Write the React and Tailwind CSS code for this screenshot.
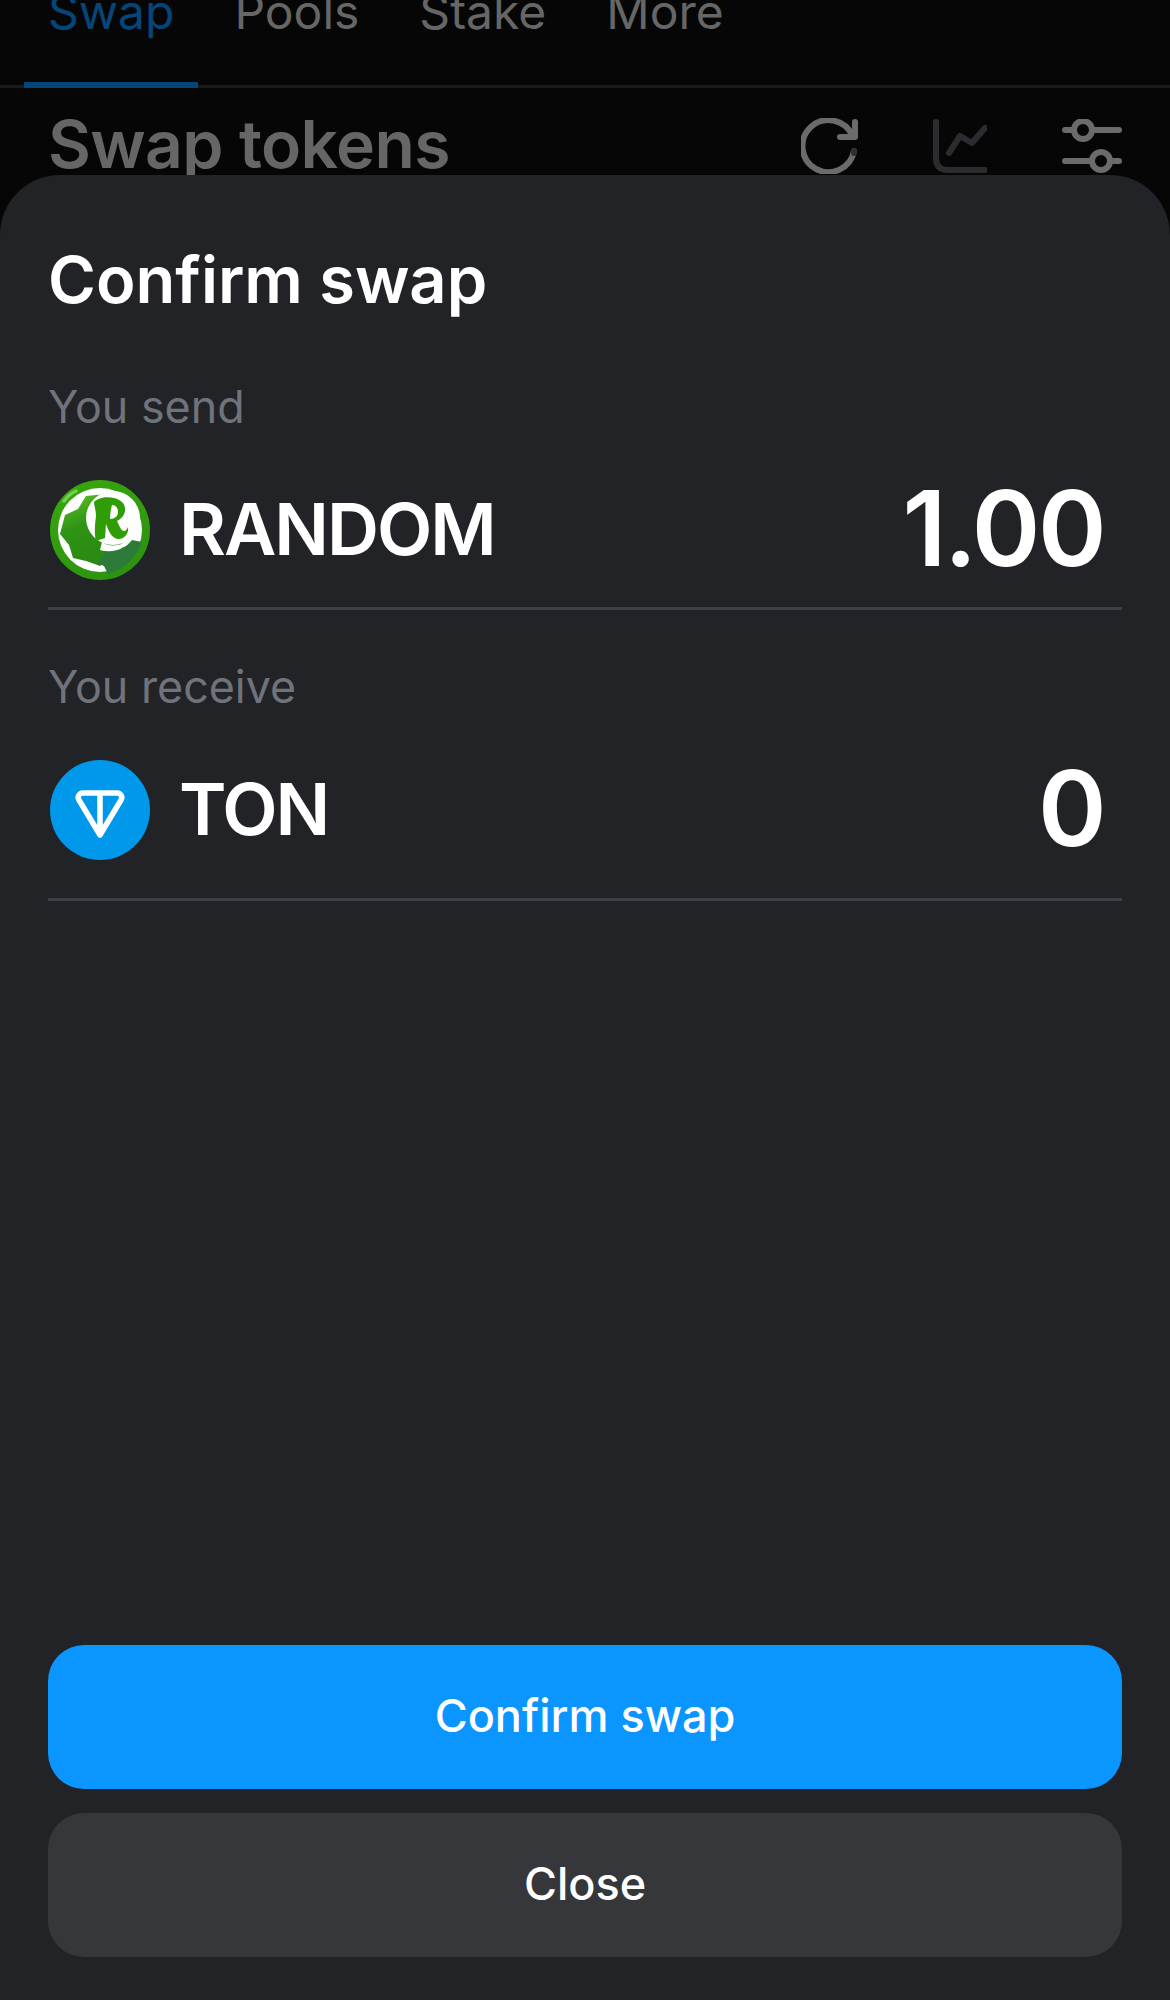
import { useState } from "react";

const font = "font-['Inter',sans-serif]";

const RandomLogo = () => (
  <svg width="100" height="100" viewBox="0 0 100 100">
    <defs>
      <linearGradient id="rim" x1="0.2" y1="0" x2="0.8" y2="1">
        <stop offset="0" stopColor="#37a70c" />
        <stop offset="1" stopColor="#2c9110" />
      </linearGradient>
      <linearGradient id="blob" x1="0.2" y1="0.1" x2="0.5" y2="0.9">
        <stop offset="0" stopColor="#52b522" />
        <stop offset="0.4" stopColor="#2f9414" />
        <stop offset="1" stopColor="#2a8a12" />
      </linearGradient>
    </defs>
    <circle cx="50" cy="50" r="50" fill="url(#rim)" />
    <path d="M14 21c3-4 7-8 12-10" stroke="#74cf50" strokeWidth="3.500" strokeLinecap="round" fill="none" />
    <circle cx="50" cy="50" r="42" fill="#fff" />
    <path d="M36 16l20-2 6 24 14 34-14 6-12 8-14-5-13-3-4-13-9-11 5-19 13-6 8-13Z" fill="url(#blob)" />
    <path d="M47 83l11-13c8 2 18-2 24-10l10 2c-4 14-18 28-34 32l-4-8Z" fill="#2c7b38" />
    <circle cx="63" cy="38" r="27" fill="#fff" />
    <path d="M52 62c8 6 20 4 30-4-5 10-18 16-32 12Z" fill="#fff" />
    <path d="M44 22c4-4 12-6 20-4 8 2 12 7 11 13-1 5-4 8-8 10 2 4 4 10 7 10 2 0 3-2 4-4 1 6-3 12-9 12-7 0-10-7-13-15l-1 14-9 3c-2-8-1-17 0-25 0-6-2-10-2-14Z" fill="#2f9e06" />
    <path d="M62 25c-1 4-2 9-2 14 5 0 8-3 8-7s-2-7-6-7Z" fill="#fff" />
  </svg>
);

const TonLogo = () => (
  <svg width="100" height="100" viewBox="0 0 100 100">
    <circle cx="50" cy="50" r="50" fill="#0098ea" />
    <path d="M33 33h34c4 0 6 4 4 7L50 75 29 40c-2-3 0-7 4-7ZM50 33v42" fill="none" stroke="#fff" strokeWidth="5.500" strokeLinejoin="round" />
  </svg>
);

const TokenRow = ({ label, logo, name, amount, rowClass }) => (
  <div className="flex flex-col">
    <div className="pt-px text-[44.800px] leading-[47px] text-[#6e737c]">{label}</div>
    <div className={`flex items-center justify-between border-b-[3px] border-[#3f4046] pr-[18px] pt-[49px] ${rowClass}`}>
      <div className="flex items-center gap-[29px] pl-0.5">
        {logo}
        <span className="pb-0.5 text-[72px] font-semibold leading-none tracking-[-2px] text-white">{name}</span>
      </div>
      <span className="h-[100px] text-[104px] font-semibold leading-[96px] tracking-[-2.500px] text-white">{amount}</span>
    </div>
  </div>
);

export default function App() {
  const [tab] = useState("Swap");
  const tabs = ["Swap", "Pools", "Stake", "More"];

  return (
    <div className={`relative h-[2000px] w-[1170px] overflow-hidden bg-[#060606] ${font}`}>
      {/* Tabs, scrolled partly off the top */}
      <div className="-mt-[50px] flex h-[138px] gap-[12px] border-b-[3px] border-[#1a1a1a] pl-6">
        {tabs.map((t) => (
          <div
            key={t}
            className={`flex h-[138px] items-center border-b-[6px] px-[24px] pb-[9px] text-[48px] ${
              t === tab ? "border-[#05467a] text-[#05467a]" : "border-transparent text-[#666666]"
            }`}
          >
            {t}
          </div>
        ))}
      </div>

      {/* Page behind the sheet */}
      <div className="flex items-start justify-between pl-12 pr-12 pt-[21px]">
        <h1 className="text-[66px] font-semibold leading-[70px] tracking-[-0.600px] text-[#666666]">Swap tokens</h1>
        <div className="flex items-center gap-[75px] pt-[9px]">
          <svg width="57" height="56" viewBox="0 0 57 56" fill="none" strokeWidth="6" strokeLinecap="round" strokeLinejoin="round">
            <path d="M51 17A26 26 0 1 0 53 33" stroke="#6b6b6b" />
            <path d="M54 4v15H39" stroke="#6b6b6b" />
            <path d="M53 33v2" stroke="#2e2f33" />
          </svg>
          <svg width="54" height="54" viewBox="0 0 54 54" fill="none" strokeWidth="6" strokeLinecap="round" strokeLinejoin="round" stroke="#2b2c30">
            <path d="M3 3v36c0 8 4 12 12 12h37" />
            <path d="M16 34l11-17 12 7 13-15" />
          </svg>
          <svg width="60" height="54" viewBox="0 0 60 54" fill="none" stroke="#6b6b6b" strokeWidth="6" strokeLinecap="round">
            <path d="M3 11h9M30 11h27M3 42h27M48 42h9" />
            <circle cx="21" cy="11" r="9" />
            <circle cx="39" cy="42" r="9" />
          </svg>
        </div>
      </div>

      {/* Confirm sheet */}
      <div className="absolute inset-x-0 bottom-0 top-[175px] flex flex-col rounded-t-[60px] bg-[#222327] px-12 pb-[43px] pt-[68px]">
        <h2 className="text-[65px] font-semibold leading-[74px] text-white">Confirm swap</h2>

        <div className="mt-[66px]">
          <TokenRow label="You send" logo={<RandomLogo />} name="RANDOM" amount="1.00" rowClass="pb-[27px]" />
        </div>
        <div className="mt-[53px]">
          <TokenRow label="You receive" logo={<TonLogo />} name="TON" amount="0" rowClass="pb-[38px]" />
        </div>

        <div className="mt-auto flex flex-col gap-[24px]">
          <button className="h-[144px] rounded-[36px] bg-[#0a95ff] pb-0.5 text-[45px] font-medium text-white">Confirm swap</button>
          <button className="h-[144px] rounded-[36px] bg-[#36373b] pb-0.5 text-[45px] font-medium text-white">Close</button>
        </div>
      </div>
    </div>
  );
}
